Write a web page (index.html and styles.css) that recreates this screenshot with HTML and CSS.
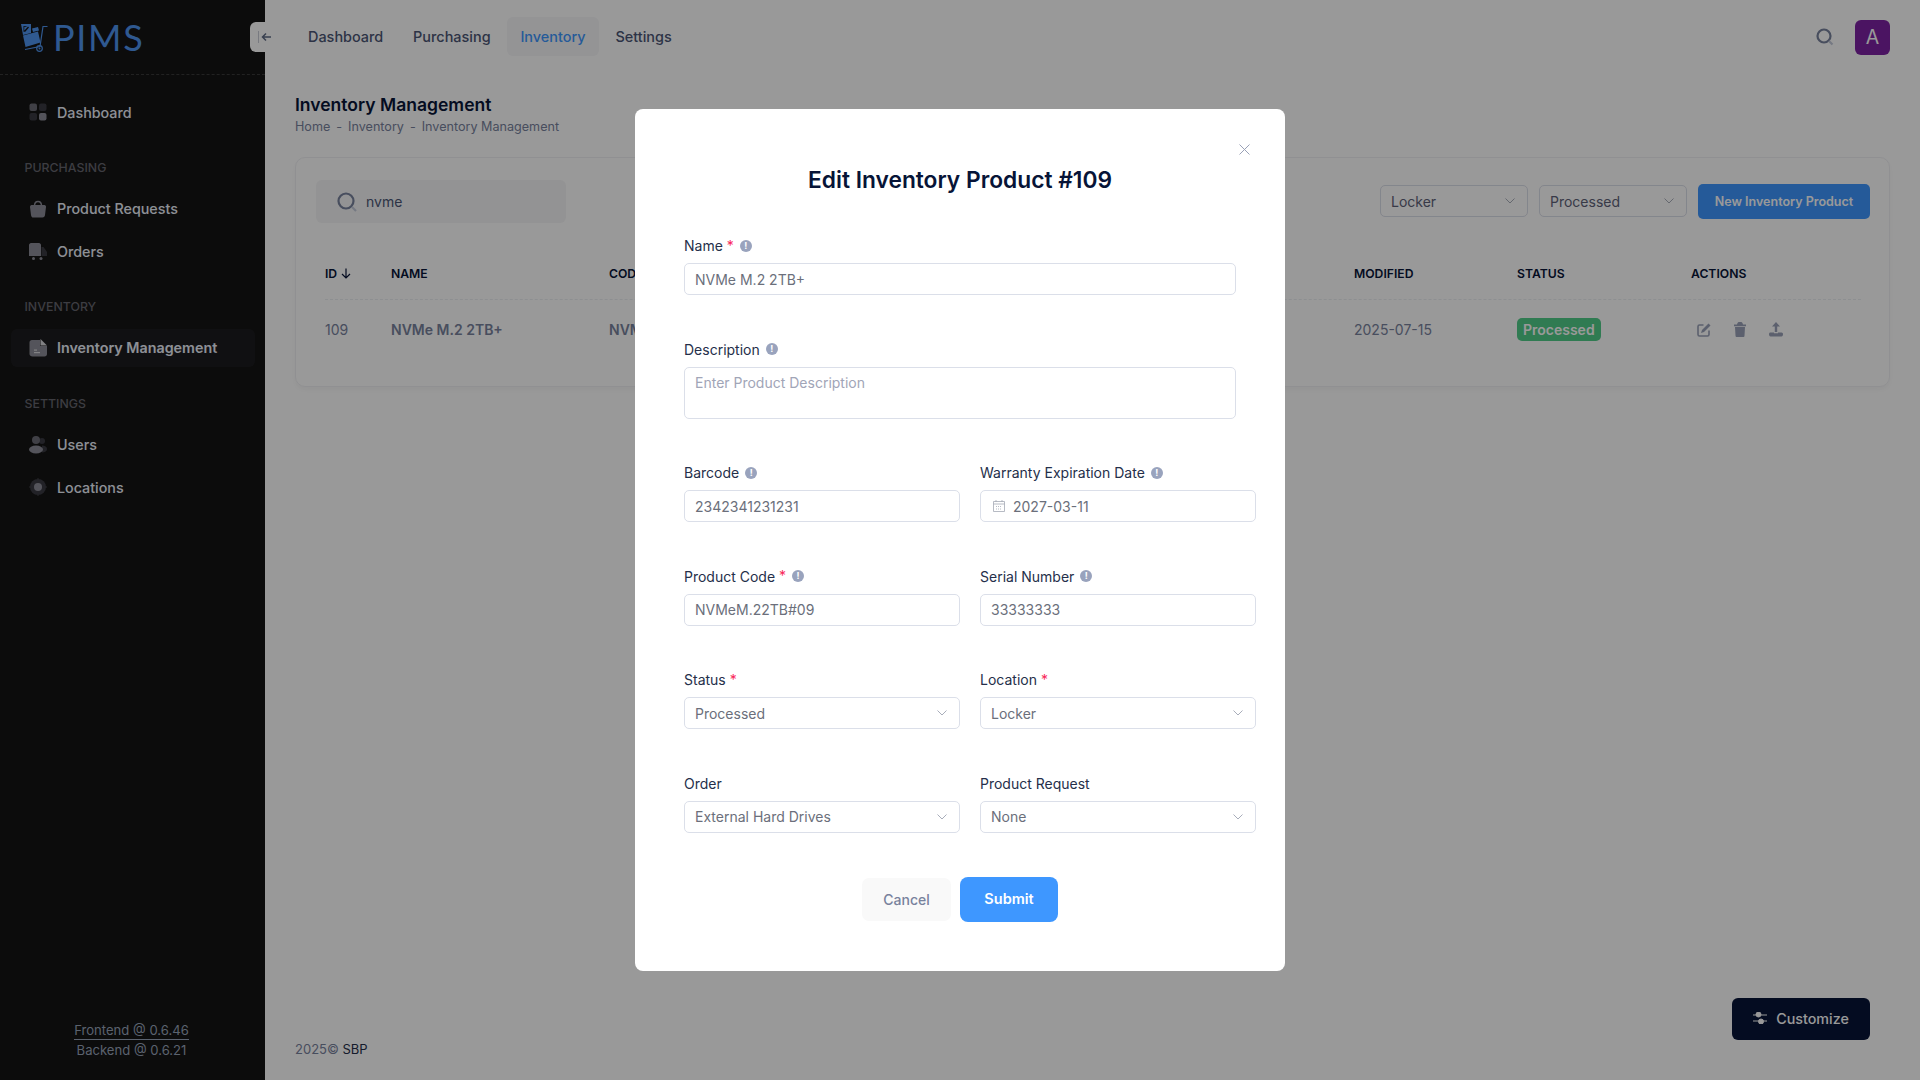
FILE: index.html
```html
<!DOCTYPE html>
<html lang="en">

<head>
    <meta charset="UTF-8" />
    <meta name="viewport" content="width=device-width, initial-scale=1" />
    <title>PIMS - Inventory Management</title>
    <link rel="stylesheet" href="styles.css">
</head>

<body>
    <aside class="sidebar">
        <div class="logo">
            <svg class="logo-mark" viewBox="0 0 27 29" width="27" height="29">
                <path class="logo-fill" d="M0 1h10v9L2 12z" />
                <path class="logo-cut" d="M3 8l4-4.500 1 1-4 4.500zM2.500 3h3v.8h-2.200v5H2.500z" />
                <path class="logo-fill" d="M11 5.500l6-1.500 1 3.500-6 1.500z" />
                <path class="logo-fill" d="M2 12.500L17 8.500l2.500 11-15 4.500z" />
                <path class="logo-line" d="M26.500 3.500H22l-3 20-15 3" />
                <circle class="logo-line" cx="18.500" cy="25.500" r="2.800" />
                <circle class="logo-fill" cx="18.500" cy="25.500" r="1" />
            </svg>
            <span class="logo-text">PIMS</span>
        </div>

        <nav class="side-menu">
            <a class="side-item">
                <svg class="side-icon" viewBox="0 0 18 18">
                    <rect class="tone-b" x="0.500" y="0.500" width="7.500" height="7.500" rx="2" />
                    <rect class="tone-a" x="10" y="0.500" width="7.500" height="7.500" rx="2" />
                    <rect class="tone-a" x="0.500" y="10" width="7.500" height="7.500" rx="2" />
                    <rect class="tone-c" x="10" y="10" width="7.500" height="7.500" rx="2" />
                </svg>
                Dashboard
            </a>

            <div class="side-label">Purchasing</div>
            <a class="side-item">
                <svg class="side-icon" viewBox="0 0 18 18">
                    <path class="tone-line" d="M5.500 6c0-6 7-6 7 0" />
                    <path class="tone-c" d="M2.500 5h13c1 0 1.500 1 1.500 2l-1 8c-.2 1.500-1 2.500-2.500 2.500h-10C3 17.500 2.200 16.500 2 15L1 7c0-1 .5-2 1.500-2z" />
                </svg>
                Product Requests
            </a>
            <a class="side-item">
                <svg class="side-icon" viewBox="0 0 18 18">
                    <path class="tone-c" d="M2 1h8c1 0 2 1 2 2v11H0V3c0-1 1-2 2-2z" />
                    <path class="tone-a" d="M12.500 5h2l3.500 5v4h-5.500z" />
                    <circle class="tone-c" cx="4.500" cy="16.500" r="1.500" />
                    <circle class="tone-c" cx="12" cy="16.500" r="1.500" />
                </svg>
                Orders
            </a>

            <div class="side-label">Inventory</div>
            <a class="side-item active">
                <svg class="side-icon" viewBox="0 0 18 18">
                    <path class="tone-c" d="M3 1h8v6h7v8c0 1.500-1 2.500-2.500 2.500h-12C2 17.500 .500 16.500 .500 15V3.500C.500 2 1.500 1 3 1z" />
                    <path class="tone-d" d="M11.500 0l6.500 6.500h-6.500z" />
                    <rect class="tone-d" x="5" y="10.500" width="3" height="1.200" />
                    <rect class="tone-d" x="5" y="13" width="6" height="1.200" />
                </svg>
                Inventory Management
            </a>

            <div class="side-label">Settings</div>
            <a class="side-item">
                <svg class="side-icon" viewBox="0 0 18 18">
                    <circle class="tone-a" cx="13" cy="5" r="3" />
                    <path class="tone-a" d="M13 9.500c3 0 5 1.500 5 3.500s-2 3.500-5 3.500z" />
                    <circle class="tone-b" cx="7" cy="4" r="4" />
                    <ellipse class="tone-c" cx="7" cy="13.500" rx="7" ry="4" />
                </svg>
                Users
            </a>
            <a class="side-item">
                <svg class="side-icon" viewBox="0 0 18 18">
                    <circle class="tone-a" cx="9" cy="9" r="8" />
                    <rect class="tone-a" x="8.400" y="0" width="1.200" height="18" />
                    <rect class="tone-a" x="0" y="8.400" width="18" height="1.200" />
                    <circle class="tone-c" cx="9" cy="9" r="4" />
                </svg>
                Locations
            </a>
        </nav>

        <div class="versions">
            <span class="version-front">Frontend @ 0.6.46</span>
            <span>Backend @ 0.6.21</span>
        </div>
    </aside>

    <button class="side-toggle">
        <svg viewBox="0 0 14 12" width="14" height="12">
            <path class="toggle-bar" d="M.500 0v12" />
            <path class="toggle-arrow" d="M13 6H4.500M8 2.500L4.500 6 8 9.500" />
        </svg>
    </button>

    <div class="main">
        <header class="topbar">
            <nav class="top-nav">
                <a>Dashboard</a>
                <a>Purchasing</a>
                <a class="active">Inventory</a>
                <a>Settings</a>
            </nav>
            <div class="top-right">
                <svg class="top-search" viewBox="0 0 18 18" width="18" height="18">
                    <circle cx="8" cy="8" r="6.500" />
                    <path class="search-tail" d="M13 13l3.500 3.500" />
                </svg>
                <div class="avatar">A</div>
            </div>
        </header>

        <div class="page-title">
            <h1>Inventory Management</h1>
            <div class="crumbs">
                <span>Home</span><i>-</i><span>Inventory</span><i>-</i><span>Inventory Management</span>
            </div>
        </div>

        <section class="card">
            <div class="toolbar">
                <div class="search-box">
                    <svg viewBox="0 0 20 20" width="20" height="20">
                        <circle cx="9" cy="9" r="7.500" />
                        <path class="search-tail" d="M15 15l4 4" />
                    </svg>
                    nvme
                </div>
                <div class="toolbar-right">
                    <div class="small-select">Locker<svg class="chev" viewBox="0 0 10 6"><path d="M.500 .500L5 5 9.500 .500" /></svg></div>
                    <div class="small-select">Processed<svg class="chev" viewBox="0 0 10 6"><path d="M.500 .500L5 5 9.500 .500" /></svg></div>
                    <button class="btn-new">New Inventory Product</button>
                </div>
            </div>

            <div class="table-row table-head">
                <div class="id-head">ID
                    <svg viewBox="0 0 10 11" width="10" height="11">
                        <path d="M5 .500v9.500M1 6l4 4 4-4" />
                    </svg>
                </div>
                <div>Name</div>
                <div>Code</div>
                <div>Location</div>
                <div>Modified</div>
                <div>Status</div>
                <div>Actions</div>
            </div>
            <div class="table-row table-body">
                <div>109</div>
                <div class="cell-name">NVMe M.2 2TB+</div>
                <div class="cell-name">NVMeM.22TB#09</div>
                <div>Locker</div>
                <div>2025-07-15</div>
                <div><span class="badge">Processed</span></div>
                <div class="actions">
                    <svg viewBox="0 0 14 14" width="14" height="14">
                        <path class="action-stroke" d="M6.500 2H2.500C1.500 2 1 2.500 1 3.500v8c0 1 .5 1.500 1.500 1.500h8c1 0 1.500-.5 1.500-1.500V7.500" />
                        <path class="action-fill" d="M11.500 .500l2 2L7 9l-3 1 1-3z" />
                    </svg>
                    <svg viewBox="0 0 14 15" width="14" height="15">
                        <path class="action-fill" d="M1 2.500h12v1.800H1zM4.500 1L5.500 0h3l1 1 .5 1.500H4zM2 5h10l-.5 8.500c0 1-.5 1.500-1.500 1.500H4c-1 0-1.500-.5-1.500-1.500z" />
                    </svg>
                    <svg viewBox="0 0 14 15" width="14" height="15">
                        <path class="action-fill" d="M7 0l4 4.500H8.200V10H5.800V4.500H3zM1.500 10.500H5v.8h4v-.8h3.500c1 0 1.500 .7 1.500 1.800s-.5 2.200-1.500 2.200h-11C.5 14.500 0 13.500 0 12.300s.5-1.800 1.500-1.800z" />
                    </svg>
                </div>
            </div>
        </section>

        <footer class="page-foot">
            <span>2025©</span> <a>SBP</a>
        </footer>
    </div>

    <button class="btn-customize">
        <svg viewBox="0 0 14 12" width="14" height="12">
            <path d="M0 3h14M0 9h14" />
            <circle cx="5.500" cy="2.500" r="2.500" />
            <circle cx="8" cy="9.500" r="2.500" />
        </svg>
        Customize
    </button>

    <div class="overlay">
        <div class="modal">
            <svg class="modal-close" viewBox="0 0 11 11" width="11" height="11">
                <path d="M.500 .500l10 10M10.500 .500l-10 10" />
            </svg>
            <h2>Edit Inventory Product #109</h2>

            <form class="form-grid" id="productForm"></form>

            <div class="modal-actions">
                <button class="btn-cancel">Cancel</button>
                <button class="btn-submit">Submit</button>
            </div>
        </div>
    </div>

    <script>
        const fields = [
            { label: "Name", required: true, info: true, value: "NVMe M.2 2TB+", wide: true },
            { label: "Description", info: true, placeholder: "Enter Product Description", wide: true, area: true },
            { label: "Barcode", info: true, value: "2342341231231" },
            { label: "Warranty Expiration Date", info: true, value: "2027-03-11", date: true },
            { label: "Product Code", required: true, info: true, value: "NVMeM.22TB#09" },
            { label: "Serial Number", info: true, value: "33333333" },
            { label: "Status", required: true, value: "Processed", select: true },
            { label: "Location", required: true, value: "Locker", select: true },
            { label: "Order", value: "External Hard Drives", select: true },
            { label: "Product Request", value: "None", select: true }
        ];

        const chevron = `<svg class="chev" viewBox="0 0 10 6"><path d="M.5 .5L5 5 9.500 .5" /></svg>`;
        const calendar = `<svg class="cal" viewBox="0 0 12 12" width="12" height="12"><path d="M.5 1.500h11v10H.5zM.5 4h11M3 0v2M9 0v2" /><path class="cal-dots" d="M3 6.500h6M3 9h6" /></svg>`;
        const info = `<span class="info">!</span>`;

        const form = document.getElementById("productForm");

        fields.forEach(f => {
            const div = document.createElement("div");
            div.className = f.wide ? "field wide" : "field";
            const cls = ["control"];
            if (f.area) cls.push("area");
            if (f.placeholder) cls.push("empty");
            div.innerHTML = `
          <div class="field-label">${f.label}${f.required ? `<span class="req">*</span>` : ""}${f.info ? info : ""}</div>
          <div class="${cls.join(" ")}">${f.date ? calendar : ""}<span>${f.value || f.placeholder}</span>${f.select ? chevron : ""}</div>
        `;
            form.appendChild(div);
        });
    </script>
</body>

</html>
```

FILE: styles.css
```css
:root {
    --primary: #3e97ff;
    --ink: #071437;
    --label: #252f4a;
    --muted: #78829d;
    --soft: #99a1b7;
    --line: #dbdfe9;
}

* {
    box-sizing: border-box;
}

body {
    margin: 0;
    width: 1920px;
    height: 1080px;
    overflow: hidden;
    display: flex;
    position: relative;
    font-family: 'Inter', 'Liberation Sans', sans-serif;
    font-size: 14px;
    background-color: #fff;
    color: var(--ink);
}

button {
    font-family: inherit;
    border: none;
    cursor: pointer;
}

/* sidebar */

.sidebar {
    width: 265px;
    height: 1080px;
    flex-shrink: 0;
    display: flex;
    flex-direction: column;
    background-color: #141414;
    color: #ecf0fa;
}

.logo {
    height: 75px;
    flex-shrink: 0;
    display: flex;
    align-items: center;
    gap: 5px;
    padding-left: 21px;
    border-bottom: 1px dashed #3a3a3a;
}

.logo-mark {
    margin-top: 1px;
}

.logo-fill {
    fill: #4f95f0;
}

.logo-cut {
    fill: #141414;
}

.logo-line {
    fill: none;
    stroke: #4f95f0;
    stroke-width: 1.200;
}

.logo-text {
    font-family: 'Lato', sans-serif;
    font-size: 36px;
    line-height: 36px;
    letter-spacing: 1.700px;
    color: #4f95f0;
}

.side-menu {
    display: flex;
    flex-direction: column;
    gap: 4.600px;
    padding: 18px 10px 0 11px;
    flex-grow: 1;
}

.side-item {
    height: 38px;
    display: flex;
    align-items: center;
    gap: 10px;
    padding-left: 18px;
    border-radius: 6px;
    font-weight: 500;
    font-size: 14.300px;
}

.side-item.active {
    background-color: #1c1c1f;
    font-weight: 600;
}

.side-icon {
    width: 18px;
    height: 18px;
    flex-shrink: 0;
}

.tone-a {
    fill: #3a3a42;
}

.tone-b {
    fill: #6c6c75;
}

.tone-c {
    fill: #8d8d98;
}

.tone-d {
    fill: #d8d8dc;
}

.tone-line {
    fill: none;
    stroke: #8d8d98;
    stroke-width: 1.500;
}

.side-label {
    padding: 22px 0 7.500px 13.500px;
    font-size: 12.350px;
    line-height: 20px;
    font-weight: 500;
    text-transform: uppercase;
    color: #66666f;
}

.versions {
    display: flex;
    flex-direction: column;
    align-items: center;
    padding: 0 2px 21px 0;
    font-size: 13.100px;
    line-height: 18px;
    color: #98a3b8;
}

.version-front {
    border-bottom: 1px solid #98a3b8;
    margin-bottom: 1px;
}

.side-toggle {
    position: absolute;
    left: 250px;
    top: 22px;
    width: 29px;
    height: 30px;
    padding: 0;
    display: flex;
    align-items: center;
    justify-content: center;
    border-radius: 6px;
    background-color: #fff;
    z-index: 2;
}

.toggle-bar {
    fill: none;
    stroke: #c8ccd6;
}

.toggle-arrow {
    fill: none;
    stroke: #5f6b85;
    stroke-width: 1.500;
}

/* top bar */

.main {
    flex-grow: 1;
    min-width: 0;
    display: flex;
    flex-direction: column;
    padding: 0 30px;
}

.topbar {
    height: 75px;
    flex-shrink: 0;
    display: flex;
    align-items: center;
    justify-content: space-between;
}

.top-nav {
    display: flex;
    gap: 3.800px;
    margin-top: -1.500px;
}

.top-nav a {
    height: 39px;
    padding: 0 13px;
    display: flex;
    align-items: center;
    border-radius: 6px;
    font-size: 14.450px;
    font-weight: 500;
    color: #4b5675;
}

.top-nav a.active {
    background-color: #f7f7f8;
    color: var(--primary);
}

.top-right {
    display: flex;
    align-items: center;
    gap: 21px;
    margin-top: -1px;
}

.top-search {
    fill: none;
    stroke: var(--muted);
    stroke-width: 2.200;
}

.search-tail {
    stroke: #c4cada;
}

.avatar {
    width: 35px;
    height: 35px;
    display: flex;
    align-items: center;
    justify-content: center;
    border-radius: 6px;
    background-color: #7e22a3;
    color: #fff;
    font-size: 19.500px;
}

.page-title {
    padding-top: 19px;
}

.page-title h1 {
    margin: 0;
    font-size: 17.550px;
    line-height: 22px;
    font-weight: 600;
}

.crumbs {
    display: flex;
    margin-top: 1.500px;
    font-size: 12.600px;
    line-height: 18px;
    color: var(--muted);
}

.crumbs i {
    font-style: normal;
    padding: 0 6px;
}

/* card */

.card {
    margin-top: 21.500px;
    height: 230px;
    padding: 22px 19px 0 20px;
    border: 1px solid #f1f1f4;
    border-radius: 10px;
    box-shadow: 0 3px 4px rgba(0, 0, 0, 0.03);
}

.toolbar {
    height: 43px;
    display: flex;
    align-items: center;
    justify-content: space-between;
}

.search-box {
    width: 250px;
    height: 43px;
    display: flex;
    align-items: center;
    gap: 9px;
    padding-left: 21px;
    border-radius: 6px;
    background-color: #f5f5f7;
    color: #4b5675;
}

.search-box svg {
    fill: none;
    stroke: var(--muted);
    stroke-width: 2.200;
}

.toolbar-right {
    display: flex;
    align-items: center;
    gap: 11px;
}

.small-select {
    width: 148px;
    height: 32px;
    margin-top: -1px;
    display: flex;
    align-items: center;
    justify-content: space-between;
    padding: 0 12px 0 10px;
    border: 1px solid var(--line);
    border-radius: 5px;
    color: #5e6278;
}

.chev {
    width: 10px;
    height: 6px;
    flex-shrink: 0;
    fill: none;
    stroke: #a8adba;
    stroke-width: 1;
}

.btn-new {
    width: 172px;
    height: 35px;
    border-radius: 5px;
    background-color: var(--primary);
    color: #fff;
    font-size: 12.500px;
    font-weight: 600;
}

.table-row {
    display: grid;
    grid-template-columns: 66px 218px 611px 134px 163px 174px 168px;
    align-items: center;
    margin: 0 9px;
}

.table-head {
    height: 54px;
    margin-top: 23px;
    padding-top: 2px;
    border-bottom: 1px dashed #eceef2;
    font-size: 12.200px;
    font-weight: 600;
    text-transform: uppercase;
}

.id-head {
    display: flex;
    align-items: center;
    gap: 4px;
}

.id-head svg {
    fill: none;
    stroke: var(--ink);
    stroke-width: 1.200;
}

.table-body {
    height: 60px;
    padding-bottom: 1px;
    color: var(--muted);
    font-size: 14px;
}

.cell-name {
    font-weight: 600;
    font-size: 14px;
}

.badge {
    display: inline-block;
    padding: 0 6px;
    height: 23px;
    line-height: 23px;
    border-radius: 5px;
    background-color: #50cd89;
    color: #fff;
    font-size: 14px;
    font-weight: 600;
}

.actions {
    display: flex;
    align-items: center;
    gap: 22px;
    padding-left: 6px;
}

.action-fill {
    fill: var(--soft);
}

.action-stroke {
    fill: none;
    stroke: var(--soft);
    stroke-width: 1.600;
}

.page-foot {
    margin-top: auto;
    padding-bottom: 22px;
    font-size: 13px;
    line-height: 18px;
    color: var(--muted);
}

.page-foot a {
    color: var(--label);
}

.btn-customize {
    position: absolute;
    left: 1732px;
    top: 998px;
    width: 138px;
    height: 42px;
    padding: 0 0 2px;
    display: flex;
    align-items: center;
    justify-content: center;
    gap: 9px;
    border-radius: 6px;
    background-color: var(--ink);
    color: #fff;
    font-size: 14.300px;
    font-weight: 500;
}

.btn-customize svg {
    fill: #fff;
    stroke: #fff;
    stroke-width: 1;
}

/* modal */

.overlay {
    position: fixed;
    inset: 0;
    z-index: 10;
    display: flex;
    align-items: center;
    justify-content: center;
    background-color: rgba(0, 0, 0, 0.4);
}

.modal {
    position: relative;
    width: 650px;
    height: 862px;
    padding: 56px 29px 0 49px;
    border-radius: 8px;
    background-color: #fff;
}

.modal-close {
    position: absolute;
    top: 35px;
    right: 35px;
    fill: none;
    stroke: var(--soft);
    stroke-width: 1;
}

.modal h2 {
    margin: 0 0 41px;
    text-align: center;
    padding-right: 20px;
    font-size: 22.750px;
    line-height: 30px;
    font-weight: 600;
}

.form-grid {
    display: grid;
    grid-template-columns: 276px 276px;
    column-gap: 20px;
    row-gap: 44.600px;
}

.field.wide {
    grid-column: span 2;
    padding-right: 20px;
}

.field-label {
    height: 19px;
    margin-bottom: 8px;
    display: flex;
    align-items: center;
    font-size: 14px;
    font-weight: 400;
    color: var(--label);
}

.req {
    color: #f8285a;
    margin-left: 4px;
    margin-top: -1px;
}

.info {
    width: 12px;
    height: 12px;
    margin-left: 6px;
    display: flex;
    align-items: center;
    justify-content: center;
    border-radius: 50%;
    background-color: #99a3bd;
    color: #fff;
    font-size: 9px;
    font-weight: 700;
    line-height: 12px;
}

.control {
    height: 32px;
    display: flex;
    align-items: center;
    padding: 0 12px 0 10px;
    border: 1px solid var(--line);
    border-radius: 5px;
    color: #6b6f7b;
}

.control span {
    flex-grow: 1;
}

.control.area {
    height: 52px;
    align-items: flex-start;
    padding-top: 6px;
}

.control.empty {
    color: #a1a5b7;
}

.cal {
    margin: 0 8.500px 0 1.500px;
    fill: none;
    stroke: #a5a9b5;
    stroke-width: 0.800;
}

.cal-dots {
    stroke-dasharray: 1 1;
}

.modal-actions {
    display: flex;
    align-items: center;
    justify-content: center;
    gap: 9px;
    margin-top: 44px;
    padding-right: 20px;
}

.btn-cancel {
    width: 89px;
    height: 43px;
    border-radius: 7px;
    background-color: #f9f9f9;
    color: var(--muted);
    font-size: 14px;
    font-weight: 500;
}

.btn-submit {
    width: 98px;
    height: 45px;
    padding-bottom: 2px;
    border-radius: 8px;
    background-color: var(--primary);
    color: #fff;
    font-size: 14.500px;
    font-weight: 600;
}
```
